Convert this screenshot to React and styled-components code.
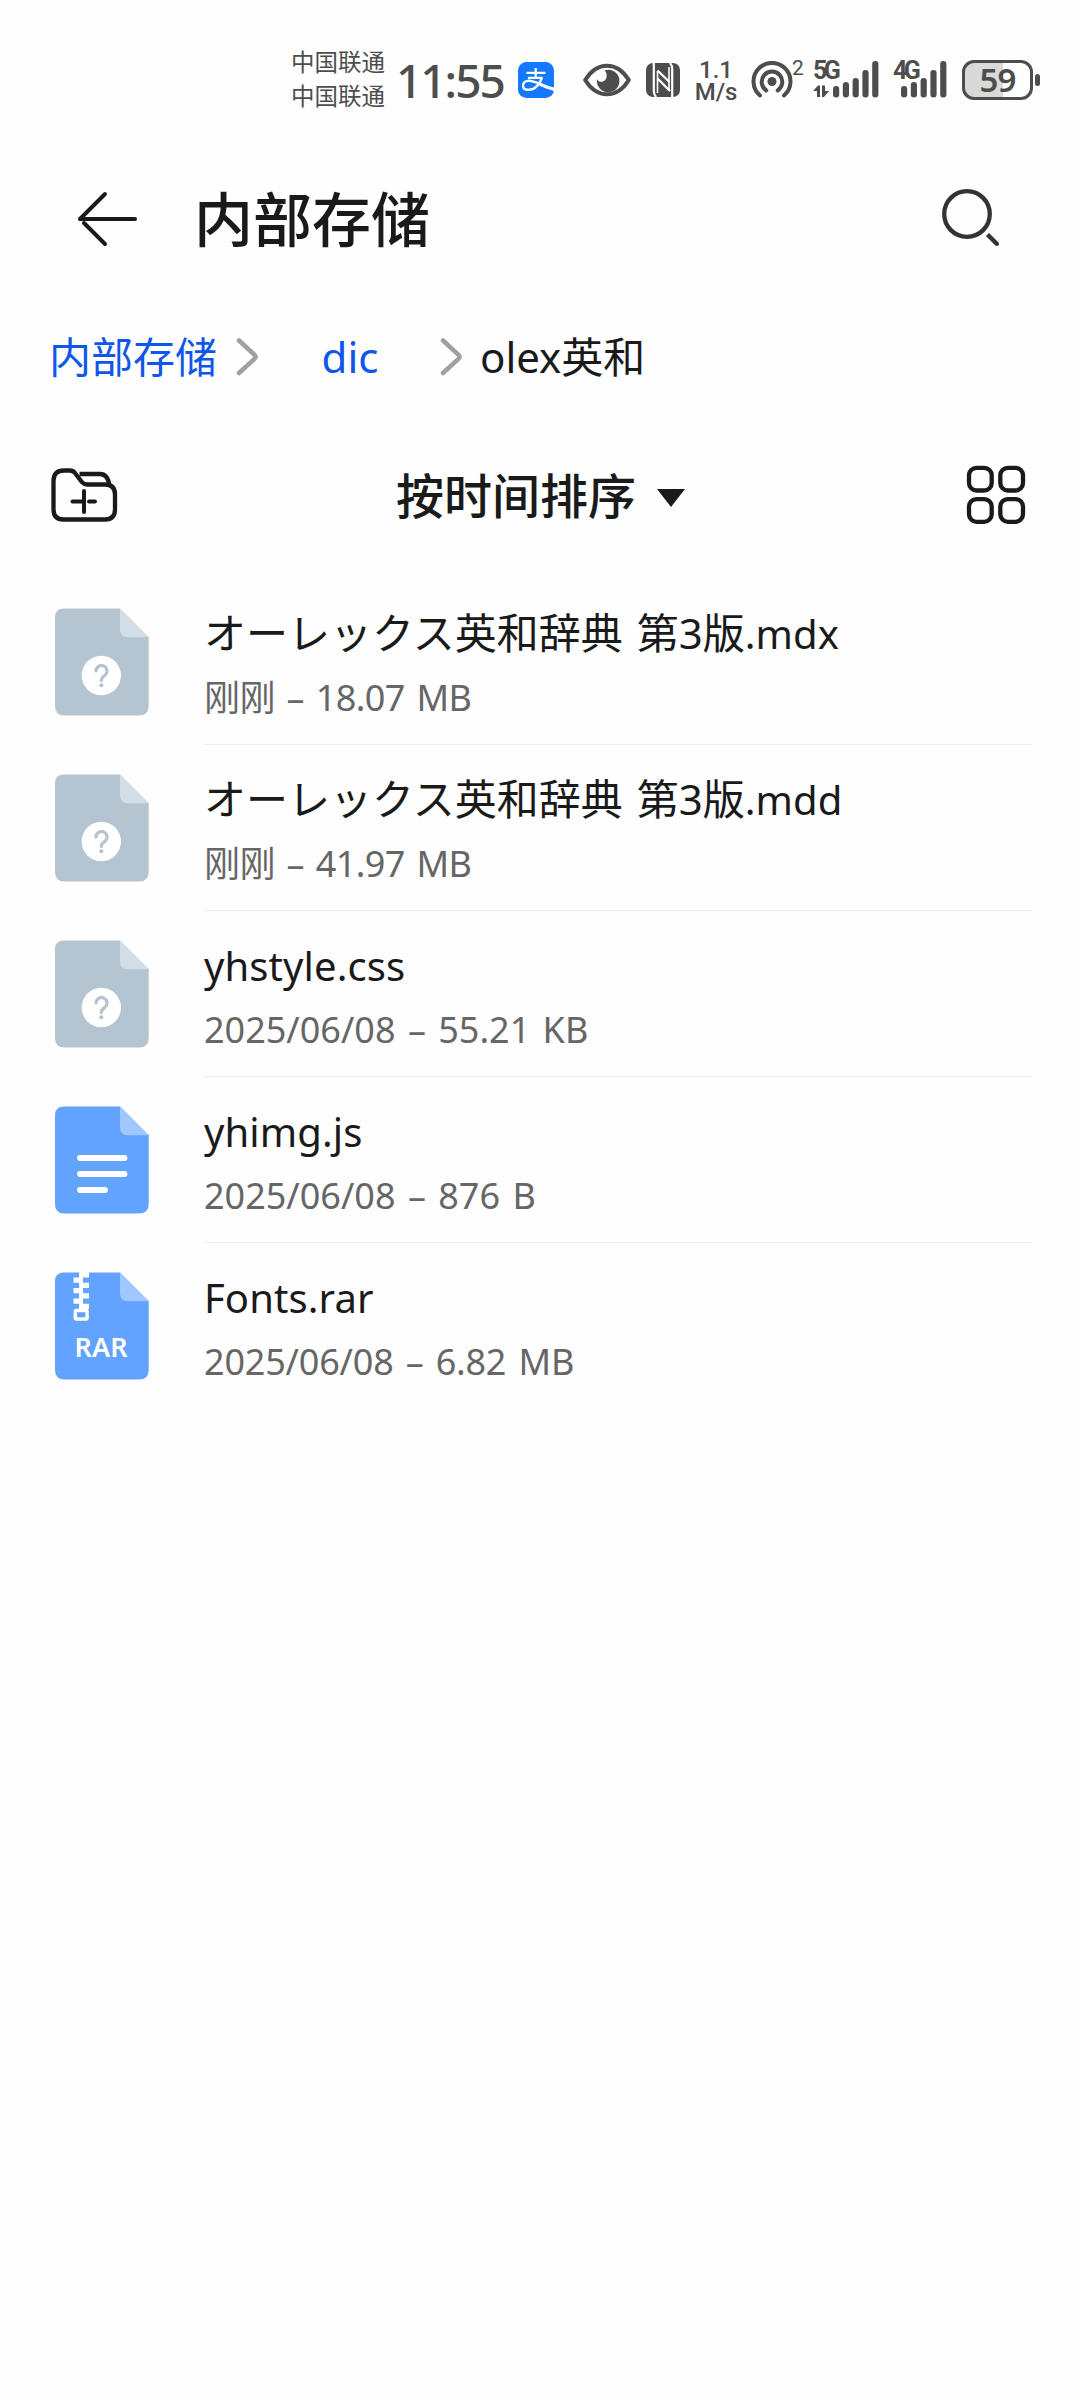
import styled, { createGlobalStyle } from "styled-components";

const GlobalStyle = createGlobalStyle`
    * {
        box-sizing: border-box;
    }

    body {
        margin: 0;
        background: #fefefe;
        font-family: "Noto Sans", "Noto Sans CJK SC", sans-serif;
        color: #1a1a1a;
    }

    svg {
        display: block;
        flex-shrink: 0;
    }
`;

const Screen = styled.div`
    width: 1080px;
    height: 2400px;
    overflow: hidden;
    background: #fefefe;
`;

/* ---------- status bar ---------- */

const StatusBar = styled.div`
    display: flex;
    align-items: center;
    height: 159px;
    padding-left: 291px;
    color: #4d4d4d;
    white-space: nowrap;
`;

const Carriers = styled.div`
    width: 105px;
    padding-bottom: 4px;
    font-family: "Noto Sans CJK SC", sans-serif;
    font-size: 23.5px;
    line-height: 34px;
`;

const Clock = styled.div`
    width: 122px;
    font-size: 46px;
    font-weight: 500;
    line-height: 50px;
    letter-spacing: -2px;
`;

const StatusIcon = styled.div`
    margin-left: ${(props) => props.$gap || 0}px;
`;

const Speed = styled.div`
    width: 44px;
    margin-left: 14px;
    padding-top: 2px;
    font-family: Roboto, sans-serif;
    font-size: 24px;
    font-weight: 500;
    line-height: 22px;
    text-align: center;
`;

const Small = styled.span`
    align-self: flex-start;
    width: 12px;
    margin: 56px 0 0 -1px;
    font-family: Roboto, sans-serif;
    font-size: 21px;
    line-height: 24px;
`;

const Network = styled.div`
    width: 66px;
    height: 38px;
    margin-left: ${(props) => props.$gap}px;
    display: grid;

    & > * {
        grid-area: 1 / 1;
    }
`;

const NetworkLabel = styled.span`
    font-family: Roboto, sans-serif;
    font-size: 25px;
    font-weight: 700;
    line-height: 20px;
    letter-spacing: -3.5px;
`;

const Battery = styled.div`
    display: flex;
    align-items: center;
    justify-content: center;
    width: 71px;
    height: 40px;
    margin-left: 3px;
    border: 3px solid #4d4d4d;
    border-radius: 12px;
    background: linear-gradient(to right, #d9d9d9 38px, transparent 38px);
    font-size: 33px;
    font-weight: 600;
    line-height: 34px;
    letter-spacing: -1px;
`;

const BatteryTip = styled.div`
    width: 5px;
    height: 12px;
    margin-left: 2px;
    border-radius: 3px;
    background: #4d4d4d;
`;

/* ---------- header ---------- */

const Header = styled.header`
    display: flex;
    align-items: center;
    height: 120px;
    padding: 0 80px 0 76px;
`;

const Title = styled.h1`
    flex: 1;
    margin: 0 0 0 56px;
    padding-bottom: 4px;
    font-family: "Noto Sans CJK SC", sans-serif;
    font-size: 59px;
    font-weight: 500;
    line-height: 80px;
`;

const Breadcrumb = styled.nav`
    display: flex;
    align-items: center;
    height: 156px;
    padding-left: 49px;
    font-size: 42px;
    line-height: 60px;
    white-space: nowrap;
`;

const Crumb = styled.span`
    width: ${(props) => props.$width}px;
    margin-left: ${(props) => props.$gap || 0}px;
    text-align: ${(props) => (props.$center ? "center" : "left")};
    color: ${(props) => (props.$link ? "#0f56ea" : "#1a1a1a")};
`;

const Toolbar = styled.div`
    display: flex;
    align-items: center;
    justify-content: space-between;
    height: 120px;
    padding: 0 54px 0 50px;
`;

const Sort = styled.div`
    display: flex;
    align-items: center;
    gap: 21px;
    margin-left: -3px;
    font-family: "Noto Sans CJK SC", sans-serif;
    font-size: 48px;
    font-weight: 500;
    line-height: 64px;

    & > span {
        padding-bottom: 5px;
    }

    & > svg {
        margin-top: 6px;
    }
`;

/* ---------- file list ---------- */

const List = styled.ul`
    margin: 24px 0 0;
    padding: 0 48px 0 54px;
    list-style: none;
`;

const Row = styled.li`
    display: flex;
    height: 166px;
    padding-top: 28px;
`;

const RowText = styled.div`
    flex: 1;
    margin: 0 0 0 54px;
    border-bottom: 1px solid ${(props) => (props.$last ? "transparent" : "#ececec")};
    white-space: nowrap;
`;

const FileName = styled.div`
    height: 60px;
    margin-top: -4px;
    font-family: "Noto Sans", "Noto Sans CJK JP", sans-serif;
    font-size: 42px;
    line-height: 60px;
    word-spacing: 3px;
`;

/* latin letters run a little smaller than the kana and kanji */
const Latin = styled.span`
    font-size: 40px;
    letter-spacing: 0.1px;
`;

const FileInfo = styled.div`
    margin-top: 9px;
    font-size: 36px;
    line-height: 52px;
    letter-spacing: ${(props) => props.$spacing || 0}px;
    word-spacing: 3px;
    color: #666;
`;

const IconText = styled.text`
    font-family: "Noto Sans", sans-serif;
    font-size: ${(props) => props.$size}px;
    font-weight: ${(props) => props.$weight};
`;

const files = [
    { name: "オーレックス英和辞典 第3版", ext: ".mdx", info: "刚刚 – 18.07 MB", type: "unknown", spacing: -0.6 },
    { name: "オーレックス英和辞典 第3版", ext: ".mdd", info: "刚刚 – 41.97 MB", type: "unknown", spacing: -0.6 },
    { ext: "yhstyle.css", info: "2025/06/08 – 55.21 KB", type: "unknown" },
    { ext: "yhimg.js", info: "2025/06/08 – 876 B", type: "text" },
    { ext: "Fonts.rar", info: "2025/06/08 – 6.82 MB", type: "rar", spacing: -0.2 },
];

function AlipayIcon() {
    return (
        <svg width="36" height="36" viewBox="0 0 36 36" fill="none">
            <rect width="36" height="36" rx="8.5" fill="#1677ff" />
            <path d="M8.5 10.8h19M17.7 6v9.5M10 15.8h14.5" stroke="#fff" strokeWidth="2.2" />
            <path
                d="M24 15.6c-1.5 5-6.5 12.200-13.300 12.200-3.700 0-5.700-2-5.700-4.400 0-2.700 2.400-4.600 5.700-4.600 7 0 13.300 5.200 25.300 8.200"
                stroke="#fff"
                strokeWidth="2.4"
            />
            <path d="M22 21.5c4 1.500 9 3.100 14 4v3.500c-5.500-1.500-10-3.500-15.500-5.800z" fill="#fff" />
        </svg>
    );
}

function EyeIcon() {
    return (
        <svg width="48" height="34" viewBox="0 0 48 34" fill="none">
            <path
                d="M2.2 17C8 7.500 15 2.700 24 2.700S40 7.500 45.800 17C40 26.500 33 31.300 24 31.300S8 26.500 2.200 17z"
                stroke="#4d4d4d"
                strokeWidth="4"
                strokeLinejoin="round"
            />
            <path
                d="M21.5 7.300A11.300 11.300 0 1 1 14 16.200c1.300 2 3.200 2.800 5.200 2.500 5-.8 6-7.400 2.300-11.400z"
                fill="#4d4d4d"
            />
        </svg>
    );
}

function NfcIcon() {
    return (
        <svg width="34" height="34" viewBox="0 0 34 34" fill="none">
            <rect width="34" height="34" rx="7" fill="#4d4d4d" />
            <path d="M7.800 0v28q0 4 2.500 6M26.200 34V6q0-4-2.500-6" stroke="#fefefe" strokeWidth="2.2" />
            <path d="M11.500 7.500L23.500 19M11.500 15.500L24 28" stroke="#fefefe" strokeWidth="2.4" />
            <path d="M11.500 8v22M23 4v22" stroke="#fefefe" strokeWidth="1.6" />
        </svg>
    );
}

function HotspotIcon() {
    return (
        <svg width="42" height="37" viewBox="0 0 42 37" fill="none" stroke="#4d4d4d" strokeLinecap="round">
            <circle cx="21" cy="20.5" r="4.5" fill="#4d4d4d" stroke="none" />
            <path d="M15.300 29.500a10.300 10.300 0 1 1 11.400 0" strokeWidth="4" />
            <path d="M9 34.500a18.500 18.500 0 1 1 24 0" strokeWidth="4" />
        </svg>
    );
}

function SignalBars({ offset, arrows }) {
    const tops = [25, 21, 17, 9, 0];
    return (
        <svg width="66" height="37" viewBox="0 0 66 37" fill="#4d4d4d">
            {tops.map((top, i) => (
                <rect key={top} x={offset + i * 9.8} y={top} width="6.2" height={36.5 - top} rx="3" />
            ))}
            {arrows && <path d="M0 30l5-5.500h2V36H4v-6zM9 24.500h3V30h4l-5 6H9z" />}
        </svg>
    );
}

function BackIcon() {
    return (
        <svg width="62" height="58" viewBox="0 0 62 58" fill="none" stroke="#1a1a1a" strokeWidth="4" strokeLinecap="round">
            <path d="M29 4L4 29h55M29 54L8 33" strokeLinejoin="round" />
        </svg>
    );
}

function SearchIcon() {
    return (
        <svg width="58" height="60" viewBox="0 0 58 60" fill="none" stroke="#333" strokeWidth="4.3">
            <circle cx="25" cy="25" r="22.8" />
            <path d="M45.500 45.500l9.500 9.500" strokeWidth="4.5" />
            <circle cx="55" cy="55" r="2" fill="#333" stroke="none" />
        </svg>
    );
}

function ChevronIcon() {
    return (
        <svg width="24" height="40" viewBox="0 0 24 40" fill="none">
            <path d="M3 3.500l15.500 14.300q2 2 0 4L3 36" stroke="#a0a0a0" strokeWidth="4.5" strokeLinecap="round" />
        </svg>
    );
}

function NewFolderIcon() {
    return (
        <svg width="68" height="56" viewBox="0 0 68 56" fill="none" stroke="#1a1a1a" strokeWidth="4.3" strokeLinejoin="round">
            <path d="M3.500 14q0-10.500 10.500-10.500h6q3 0 5 2.500l7 9.200q2 2.300 5 2.300h18q10 0 10 10v15q0 10-10 10H13.500q-10 0-10-10z" />
            <path d="M29.500 7H50q8 0 9.500 12" />
            <path d="M34 24v21M22.500 34.500H33M39 34.500h6" strokeLinecap="round" strokeWidth="4" />
        </svg>
    );
}

function GridIcon() {
    return (
        <svg width="60" height="60" viewBox="0 0 60 60" fill="none" stroke="#1a1a1a" strokeWidth="4.3">
            <rect x="3" y="2.8" width="22.7" height="22.7" rx="7.5" />
            <rect x="34.3" y="2.8" width="22.7" height="22.7" rx="7.5" />
            <rect x="3" y="34.1" width="22.7" height="22.7" rx="7.5" />
            <rect x="34.3" y="34.1" width="22.7" height="22.7" rx="7.5" />
        </svg>
    );
}

function FileIcon({ type }) {
    const unknown = type === "unknown";
    return (
        <svg width="96" height="110" viewBox="0 0 96 110">
            <path
                d="M10 1.500h56l28.700 28.700V99q0 9.500-9.500 9.500H10.500Q1 108.500 1 99V10.500Q1 1.500 10 1.500z"
                fill={unknown ? "#b4c4d0" : "#62a3ff"}
            />
            <path d="M66 1.500l28.700 28.700H74q-8 0-8-8z" fill={unknown ? "#d2dde5" : "#a1c7ff"} />
            {unknown && (
                <>
                    <circle cx="47.3" cy="68.5" r="19.7" fill="#fff" />
                    <path
                        d="M42 64a5.500 5.500 0 1 1 8.800 4.400q-3.500 2.500-3.500 5"
                        fill="none"
                        stroke="#b4c4d0"
                        strokeWidth="3.2"
                        strokeLinecap="round"
                    />
                    <circle cx="47.3" cy="78.3" r="2" fill="#b4c4d0" />
                </>
            )}
            {type === "text" && (
                <path d="M26 53h44.500M26 69h44.500M26 85h25" stroke="#fff" strokeWidth="5.8" strokeLinecap="round" />
            )}
            {type === "rar" && (
                <>
                    <path
                        d="M25 1h10v5.500h-10zM19.500 6.500h9.500v5.200h-9.500zM25 11.700h10v5.300h-10zM19.500 17h9.500v5.200h-9.500zM25 22.200h10v5.300h-10zM19.500 27.500h9.500v5.200h-9.500zM25 32.700h10v5.300h-10z"
                        fill="#fff"
                    />
                    <rect x="21.3" y="39.5" width="11.8" height="8.5" rx="1" fill="none" stroke="#fff" strokeWidth="3.4" />
                    <IconText $size={27} $weight={600} x="20.5" y="86" fill="#fff" textLength="53">
                        RAR
                    </IconText>
                </>
            )}
        </svg>
    );
}

function App() {
    return (
        <Screen>
            <GlobalStyle />
            <StatusBar>
                <Carriers>
                    <div>中国联通</div>
                    <div>中国联通</div>
                </Carriers>
                <Clock>11:55</Clock>
                <AlipayIcon />
                <StatusIcon $gap={29}>
                    <EyeIcon />
                </StatusIcon>
                <StatusIcon $gap={15}>
                    <NfcIcon />
                </StatusIcon>
                <Speed>
                    <div>1.1</div>
                    <div>M/s</div>
                </Speed>
                <StatusIcon $gap={13}>
                    <HotspotIcon />
                </StatusIcon>
                <Small>2</Small>
                <Network $gap={9}>
                    <NetworkLabel>5G</NetworkLabel>
                    <SignalBars offset={20} arrows />
                </Network>
                <Network $gap={14}>
                    <NetworkLabel>4G</NetworkLabel>
                    <SignalBars offset={8} />
                </Network>
                <Battery>59</Battery>
                <BatteryTip />
            </StatusBar>
            <Header>
                <BackIcon />
                <Title>内部存储</Title>
                <SearchIcon />
            </Header>
            <Breadcrumb>
                <Crumb $link $width={187}>内部存储</Crumb>
                <ChevronIcon />
                <Crumb $link $center $width={180}>dic</Crumb>
                <ChevronIcon />
                <Crumb $width={180} $gap={16}>olex英和</Crumb>
            </Breadcrumb>
            <Toolbar>
                <NewFolderIcon />
                <Sort>
                    <span>按时间排序</span>
                    <svg width="28" height="18" viewBox="0 0 28 18">
                        <path d="M0 0h28L14 18z" fill="#1a1a1a" />
                    </svg>
                </Sort>
                <GridIcon />
            </Toolbar>
            <List>
                {files.map((file, i) => (
                    <Row key={file.name + file.ext}>
                        <FileIcon type={file.type} />
                        <RowText $last={i === files.length - 1}>
                            <FileName>
                                {file.name}
                                <Latin>{file.ext}</Latin>
                            </FileName>
                            <FileInfo $spacing={file.spacing}>{file.info}</FileInfo>
                        </RowText>
                    </Row>
                ))}
            </List>
        </Screen>
    );
}

export default App;
